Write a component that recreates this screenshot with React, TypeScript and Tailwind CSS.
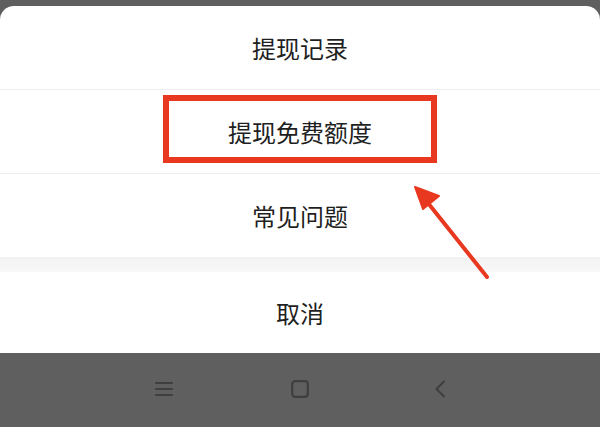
const font = "font-['Noto_Sans_CJK_SC','Noto_Sans',sans-serif]";

function Row({ label, children }: { label: string; children?: React.ReactNode }) {
  return (
    <div className="relative flex h-[83px] items-center justify-center">
      <span className={`${font} text-[24px] leading-none text-[#1f1f1f]`}>{label}</span>
      {children}
    </div>
  );
}

export default function App() {
  return (
    <div className="relative flex h-[427px] w-[600px] flex-col overflow-hidden bg-[#5f5f5f]">
      <div className="h-[6px] shrink-0" />
      <div className="flex flex-col rounded-t-[14px] bg-white">
        <Row label="提现记录" />
        <div className="h-px bg-[#eeeeee]" />
        <Row label="提现免费额度">
          <div className="absolute left-[163px] top-[5px] h-[68px] w-[274px] border-[6px] border-[#e8381f]" />
        </Row>
        <div className="h-px bg-[#eeeeee]" />
        <Row label="常见问题" />
        <div className="h-[15px] bg-gradient-to-b from-[#f2f2f2] to-[#f8f8f8]" />
        <div className="flex h-[81px] items-center justify-center">
          <span className={`${font} text-[24px] leading-none text-[#1f1f1f]`}>取消</span>
        </div>
      </div>
      <div className="flex flex-1 items-center justify-center bg-[#5f5f5f] pb-[2px]">
        <svg width="18" height="16" viewBox="0 0 18 16" className="text-[#3e3e3e]">
          <path d="M1 2h16M1 8h16M1 14h16" stroke="currentColor" strokeWidth="2" strokeLinecap="round" />
        </svg>
        <svg width="18" height="18" viewBox="0 0 18 18" className="ml-[118px] text-[#3e3e3e]">
          <rect x="1.2" y="1.2" width="15.6" height="15.6" rx="3" fill="none" stroke="currentColor" strokeWidth="2.2" />
        </svg>
        <svg width="12" height="18" viewBox="0 0 12 18" className="ml-[125px] text-[#3e3e3e]">
          <path d="M10 1.5L2.5 9l7.5 7.5" fill="none" stroke="currentColor" strokeWidth="2" strokeLinecap="round" strokeLinejoin="round" />
        </svg>
      </div>
      <svg className="pointer-events-none absolute left-0 top-0" width="600" height="427" viewBox="0 0 600 427">
        <path d="M487 277 L424 198" stroke="#e8381f" strokeWidth="4" strokeLinecap="round" />
        <path d="M415 187 L439 196 L423 209 Z" fill="#e8381f" stroke="#e8381f" strokeWidth="2" strokeLinejoin="round" />
      </svg>
    </div>
  );
}
